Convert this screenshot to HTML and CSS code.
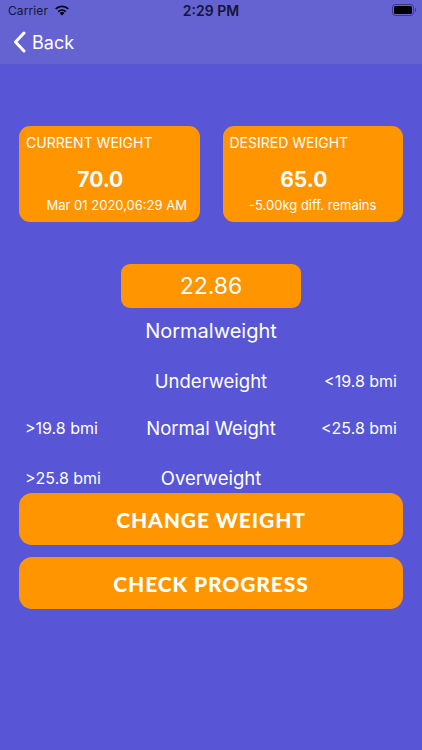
FILE: index.html
```html
<!DOCTYPE html>
<html>
<head>
<meta charset="utf-8">
<link rel="stylesheet" href="styles.css">
</head>
<body>
<div class="screen">
  <div class="topbar">
    <div class="status">
      <div class="status-left">
        <span class="carrier">Carrier</span>
        <svg class="wifi" width="16" height="12" viewBox="0 0 16 12">
          <path d="M8 11.5 L5.6 8.9 A3.4 3.4 0 0 1 10.4 8.9 Z" fill="#000"/>
          <path d="M3.7 6.9 A6.2 6.2 0 0 1 12.3 6.9 L11.1 8.2 A4.5 4.5 0 0 0 4.9 8.2 Z" fill="#000"/>
          <path d="M1.1 4.3 A9.8 9.8 0 0 1 14.9 4.3 L13.6 5.6 A8 8 0 0 0 2.4 5.6 Z" fill="#000"/>
        </svg>
      </div>
      <span class="time">2:29 PM</span>
      <div class="status-right">
        <svg class="battery" width="24" height="12" viewBox="0 0 24 12">
          <rect x="0.5" y="0.5" width="21" height="11" rx="3" fill="none" stroke="#000" stroke-opacity="0.4"/>
          <rect x="2" y="2" width="18" height="8" rx="1.6" fill="#000"/>
          <path d="M23 4 v4 a1.5 1.5 0 0 0 0-4z" fill="#000" fill-opacity="0.4"/>
        </svg>
      </div>
    </div>
    <div class="nav">
      <svg class="chevron" width="13" height="22" viewBox="0 0 13 22">
        <path d="M11 2 L2.5 11 L11 20" fill="none" stroke="#fff" stroke-width="3" stroke-linecap="round" stroke-linejoin="round"/>
      </svg>
      <span class="back">Back</span>
    </div>
  </div>

  <div class="content">
    <div class="cards">
      <div class="card">
        <div class="card-title">CURRENT WEIGHT</div>
        <div class="card-value">70.0</div>
        <div class="card-sub card-sub-date">Mar 01 2020,06:29 AM</div>
      </div>
      <div class="card">
        <div class="card-title">DESIRED WEIGHT</div>
        <div class="card-value">65.0</div>
        <div class="card-sub">-5.00kg diff. remains</div>
      </div>
    </div>

    <div class="bmi">22.86</div>
    <div class="bmi-label">Normalweight</div>

    <div class="ranges">
      <div class="range-row row1">
        <span class="r-left"></span>
        <span class="r-mid">Underweight</span>
        <span class="r-right">&lt;19.8 bmi</span>
      </div>
      <div class="range-row row2">
        <span class="r-left">&gt;19.8 bmi</span>
        <span class="r-mid">Normal Weight</span>
        <span class="r-right">&lt;25.8 bmi</span>
      </div>
      <div class="range-row row3">
        <span class="r-left">&gt;25.8 bmi</span>
        <span class="r-mid">Overweight</span>
        <span class="r-right"></span>
      </div>
    </div>

    <div class="buttons">
      <button class="btn">CHANGE WEIGHT</button>
      <button class="btn">CHECK PROGRESS</button>
    </div>
  </div>
</div>
</body>
</html>
```

FILE: styles.css
```css
* { box-sizing: border-box; }
html, body {
  margin: 0;
  padding: 0;
}
body {
  width: 422px;
  height: 750px;
  background: #5856d6;
  font-family: "Inter", "Roboto", sans-serif;
  color: #fff;
  overflow: hidden;
}
.screen {
  width: 422px;
  height: 750px;
  background: #5856d6;
}
.topbar {
  background: #6563d2;
  border-bottom: 1px solid #5a58c6;
}
.status {
  height: 20px;
  display: grid;
  grid-template-columns: 1fr auto 1fr;
  align-items: center;
  padding: 0 8px;
  color: #14143a;
}
.status-left {
  display: flex;
  align-items: center;
  gap: 6px;
}
.carrier {
  font-size: 12px;
  letter-spacing: 0.1px;
}
.wifi { margin-top: -1px; }
.time {
  font-size: 14px;
  font-weight: 600;
}
.status-right {
  display: flex;
  justify-content: flex-end;
}
.battery { margin-right: -2px; }
.nav {
  height: 44px;
  display: flex;
  align-items: center;
  padding-left: 13px;
  gap: 6px;
}
.back {
  font-size: 18px;
  color: #fff;
}
.content {
  padding: 61px 19px 0;
}
.cards {
  display: grid;
  grid-template-columns: 1fr 1fr;
  column-gap: 23px;
}
.card {
  background: #ff9500;
  border-radius: 11px;
  height: 96px;
  padding: 8px 7px 0;
  display: flex;
  flex-direction: column;
}
.card-title {
  font-size: 14px;
  line-height: 18px;
}
.card-value {
  margin-top: 16px;
  padding-right: 18px;
  font-size: 21px;
  font-weight: 700;
  line-height: 24px;
  text-align: center;
}
.card-sub {
  margin-top: 5px;
  font-size: 13px;
  line-height: 16px;
  text-align: center;
}
.card-sub-date { padding-left: 15px; }
.bmi {
  margin: 42px auto 0;
  width: 180px;
  height: 44px;
  background: #ff9500;
  border-radius: 9px;
  display: flex;
  align-items: center;
  justify-content: center;
  font-size: 23px;
}
.bmi-label {
  margin-top: 11px;
  font-size: 20px;
  line-height: 24px;
  text-align: center;
}
.ranges {
  margin-top: 26px;
}
.range-row {
  display: grid;
  grid-template-columns: 110px 1fr 110px;
  align-items: center;
  height: 24px;
}
.row2 { margin-top: 23px; }
.row3 { margin-top: 26px; }
.r-left {
  padding-left: 6px;
  font-size: 16px;
}
.r-mid {
  text-align: center;
  font-size: 18.5px;
}
.r-right {
  text-align: right;
  padding-right: 6px;
  font-size: 16px;
}
.buttons {
  margin-top: 3px;
  display: flex;
  flex-direction: column;
  gap: 12px;
}
.btn {
  height: 52px;
  border: none;
  border-radius: 13px;
  background: #ff9500;
  color: #fff;
  font-family: "Lato", sans-serif;
  font-weight: 900;
  font-size: 21px;
  letter-spacing: 0.9px;
  padding: 0;
}
```
